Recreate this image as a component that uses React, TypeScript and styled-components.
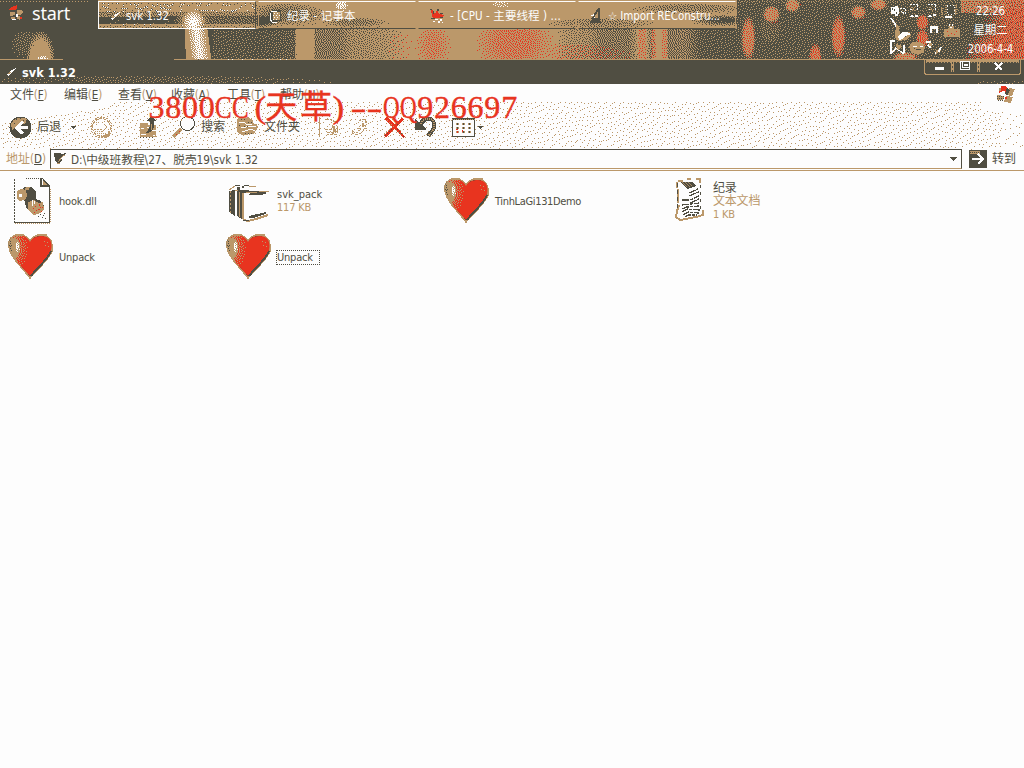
import React from "react";
import styled, { createGlobalStyle } from "styled-components";

const DARK = "#504e42";
const TAN = "#bb986a";
const RED = "#e8341f";
const WHITE = "#fdfdfd";
const UI = '"DejaVu Sans Condensed", "Noto Sans CJK SC", sans-serif';

type RGB = [number, number, number];
const palette: { hex: string; rgb: RGB }[] = [
  { hex: DARK, rgb: [80, 78, 66] },
  { hex: TAN, rgb: [187, 152, 106] },
  { hex: RED, rgb: [232, 52, 31] },
  { hex: WHITE, rgb: [253, 253, 253] },
];

const lerp = (a: RGB, b: RGB, t: number): RGB => [
  a[0] + (b[0] - a[0]) * t,
  a[1] + (b[1] - a[1]) * t,
  a[2] + (b[2] - a[2]) * t,
];
const D = palette[0].rgb;
const T = palette[1].rgb;
const R = palette[2].rgb;
const W = palette[3].rgb;

/* Error diffusion to the four palette colours; returns one path per colour. */
function diffuse(w: number, h: number, paint: (x: number, y: number) => RGB, grain = 0) {
  const paths = ["", "", "", ""];
  let seed = 7;
  let cur = new Float32Array((w + 2) * 3);
  let next = new Float32Array((w + 2) * 3);
  for (let y = 0; y < h; y++) {
    let runStart = 0;
    let runColor = -1;
    for (let x = 0; x < w; x++) {
      const src = paint(x, y);
      seed = (seed * 1103515245 + 12345) % 2147483648;
      const noise = (seed / 2147483648 - 0.5) * grain;
      const v = [0, 1, 2].map((c) => src[c] + cur[(x + 1) * 3 + c]);
      let best = 0;
      let bd = Infinity;
      palette.forEach((p, i) => {
        const d =
          (v[0] + noise - p.rgb[0]) ** 2 + (v[1] + noise - p.rgb[1]) ** 2 + (v[2] + noise - p.rgb[2]) ** 2;
        if (d < bd) {
          bd = d;
          best = i;
        }
      });
      for (let c = 0; c < 3; c++) {
        const e = Math.max(-110, Math.min(110, v[c] - palette[best].rgb[c]));
        cur[(x + 2) * 3 + c] += (e * 7) / 16;
        next[x * 3 + c] += (e * 3) / 16;
        next[(x + 1) * 3 + c] += (e * 5) / 16;
        next[(x + 2) * 3 + c] += e / 16;
      }
      if (best !== runColor) {
        if (runColor >= 0) paths[runColor] += `M${runStart} ${y}h${x - runStart}v1H${runStart}z`;
        runColor = best;
        runStart = x;
      }
    }
    paths[runColor] += `M${runStart} ${y}H${w}v1H${runStart}z`;
    cur = next;
    next = new Float32Array((w + 2) * 3);
  }
  return paths;
}

const clamp = (v: number) => Math.max(0, Math.min(1, v));
const blob = (x: number, y: number, cx: number, cy: number, rx: number, ry: number, soft = 0.4) => {
  const d = Math.hypot((x - cx) / rx, (y - cy) / ry);
  return clamp((1 - d) / soft);
};
/* Piecewise linear darkness of the flame photo along the x axis. */
const darkness: [number, number][] = [
  [0, 1], [211, 1], [212, 0.84], [248, 0.84], [253, 0.88], [294, 0.76], [296, 0], [313, 0],
  [315, 0.5], [340, 0.5], [350, 0.3], [385, 0.2], [398, 0.08], [405, 0], [555, 0], [566, 0.2], [590, 0.3],
  [600, 0.5], [628, 0.52], [635, 0.25], [638, 0], [645, 0], [650, 0.4], [655, 0], [666, 0], [668, 0.5], [685, 0.45],
  [700, 0.82], [740, 0.85], [1024, 0.85],
];
const curve = (x: number) => {
  for (let i = 1; i < darkness.length; i++) {
    if (x <= darkness[i][0]) {
      const [x0, a] = darkness[i - 1];
      const [x1, b] = darkness[i];
      return a + ((b - a) * (x - x0)) / (x1 - x0);
    }
  }
  return 0.85;
};

function flames(x: number, y: number): RGB {
  if (y === 59) return x > 62 && x < 174 ? D : T;
  if (x < 88 && y === 1) return x % 3 ? D : T;
  let tan = 1 - curve(x);
  let red = 0;
  let white = 0;
  if (y < 29 && x > 97 && x < 257) {
    tan = y < 16 ? 0.72 - Math.abs(y - 9) * 0.01 : y < 24 ? 0.04 : 0.85;
    if (x < 160 && y < 17 && y > 7) tan = 0.6;
    if (x > 205 && y > 15) tan = Math.max(tan, 0.3);
    if (y < 12) white = 0.2;
    white = Math.max(white, 0.9 * blob(x, y, 193, 22, 12, 13, 0.8));
    tan = Math.max(tan, blob(x, y, 193, 20, 20, 19, 0.7));
  } else if (y < 29 && x >= 257 && x < 737) {
    tan = 1;
    tan -= 0.5 * blob(x, y, 285, 14, 45, 13, 0.6);
    tan -= 0.9 * blob(x, y, 258, 21, 22, 7, 0.6);
    tan -= 0.45 * blob(x, y, 355, 22, 36, 6, 0.6);
    tan -= 0.35 * blob(x, y, 600, 23, 60, 7, 0.6);
    tan -= 0.4 * blob(x, y, 690, 8, 66, 6, 0.6);
    tan -= 0.95 * blob(x, y, 724, 20, 36, 6, 0.7);
    white = 0.6 * blob(x, y, 341, 5, 7, 5) + 0.25 * blob(x, y, 500, 4, 10, 4);
  } else {
    if (y > 30) {
      tan = Math.max(tan, blob(x, y, 40, 60, 15, 31, 0.35));
      tan = Math.max(tan, 0.22 * blob(x, y, 26, 43, 18, 17, 0.5));
      white = Math.max(white, blob(x, y, 42, 61, 8, 7, 0.8));
    }
    if (x > 184 && x < 213) {
      const shift = (y - 29) * 0.13;
      tan = x > 184 + shift * 0.4 && x < 207 + shift ? 1 : tan;
      white = Math.max(white, 0.75 * clamp(1.15 - Math.abs(x - 196 - shift) / 8));
    }
    red = Math.max(red, 0.26 * blob(x, y, 433, 45, 19, 30, 0.7));
    red = Math.max(red, 0.05 * blob(x, y, 400, 45, 20, 30, 0.7));
    red = Math.max(red, 0.34 * blob(x, y, 514, 42, 42, 34, 0.6));
    red = Math.max(red, 0.12 * blob(x, y, 570, 54, 70, 14, 0.5));
    if ((x > 637 && x < 646) || (x > 650 && x < 656) || (x > 661 && x < 667)) red = 0.2;
  }
  if (x > 737) {
    tan = y < 3 ? 0.3 : 0.17;
    const spots: [number, number, number, number, number][] = [
      [748, 38, 8, 25, 0.28], [771, 14, 10, 10, 0.2], [792, 5, 9, 8, 0.18],
      [815, 57, 7, 15, 0.4], [838, 36, 8, 24, 0.36], [858, 12, 9, 8, 0.22],
      [878, 4, 10, 7, 0.2], [922, 22, 7, 9, 0.45], [922, 38, 7, 10, 0.45], [905, 57, 14, 6, 0.2],
    ];
    for (const [cx, cy, rx, ry, amount] of spots) {
      const b = blob(x, y, cx, cy, rx, ry, 0.45);
      tan = Math.max(tan, b);
      red = Math.max(red, b * amount);
    }
    if (y > 18) tan = Math.max(tan, 0.3 * blob(x, y, 770, 28, 14, 20));
    const edge = clamp((x - 982 + (y > 30 ? 20 : 0) * clamp((y - 30) / 15)) / 26) * (y > 8 ? 1 : 0.8);
    tan = Math.max(tan, edge * 0.85);
    red = Math.max(red, edge * 0.48);
    if (x > 960 && y < 13) {
      tan = Math.max(tan, 0.85);
      red = Math.max(red, 0.2);
    }
  }
  let c = lerp(D, T, clamp(tan));
  c = lerp(c, R, clamp(red));
  return lerp(c, W, clamp(white));
}

const wallpaper = diffuse(1024, 60, flames, 24);
const titleShade = diffuse(
  1024,
  24,
  (x, y) =>
    lerp(D, T, x < 345 && y > 14 && y < 23 ? (x > 75 ? 0.15 : 0.07) * (y > 18 ? 1.2 : 0.8) * clamp((360 - x) / 160) : x > 975 && y > 18 ? 0.08 : 0),
  24
);
const barShade = diffuse(
  1024,
  86,
  (x, y) => {
    const start = x < 110 ? 36 - x * 0.15 : x > 980 ? 24 : 15;
    const a = y < start || y > 63 ? 0 : 0.065 * clamp((y - start) / 5 + 0.5) * (x > 1000 ? 0.5 : 1);
    return lerp(W, T, a);
  },
  50
);
const heartArt = diffuse(48, 48, (x, y) => {
  const light = blob(x, y, 11, 15, 12, 22, 1);
  const shade = blob(x, y, 5, 15, 9, 20, 0.7);
  let c = lerp(R, T, clamp(light * 0.7 + shade));
  c = lerp(c, D, 0.6 * clamp((6 - x) / 4));
  return lerp(c, W, 0.7 * blob(x, y, 11, 13, 3, 7, 0.7));
});

const Art = ({ paths }: { paths: string[] }) => (
  <>
    {paths.map((d, i) => (
      <path key={i} d={d} fill={palette[i].hex} />
    ))}
  </>
);

const Global = createGlobalStyle`
  body { margin: 0; background: ${WHITE}; overflow: hidden; }
  * { box-sizing: border-box; }
`;
const Screen = styled.div`
  width: 1024px;
  height: 768px;
  position: relative;
  display: flex;
  flex-direction: column;
  font: 11px/14px ${UI};
  color: ${DARK};
  background: ${WHITE};
`;
const Backdrop = styled.svg`
  position: absolute;
  left: 0;
  top: 0;
  z-index: 0;
  shape-rendering: crispEdges;
`;
const Svg = styled.svg`
  display: block;
  position: relative;
  flex: none;
  shape-rendering: crispEdges;
  overflow: visible;
`;
const Taskbar = styled.header`
  height: 60px;
  position: relative;
  display: flex;
  align-items: flex-start;
  color: ${WHITE};
`;
const StartButton = styled.div`
  position: relative;
  width: 98px;
  height: 26px;
  display: flex;
  align-items: center;
  padding-left: 9px;
  gap: 8px;
  font: 18px/24px "Noto Sans", sans-serif;
  letter-spacing: -0.2px;
`;
const Task = styled.div<{ $active?: boolean }>`
  position: relative;
  width: 158px;
  height: 28px;
  margin: 1px 2px 0 0;
  padding: 1px 8px 0 10px;
  display: flex;
  align-items: center;
  gap: 5px;
  border: 1px solid ${(p) => (p.$active ? WHITE : DARK)};
  border-top-color: ${WHITE};
  border-left-color: ${(p) => (p.$active ? WHITE : TAN)};
  border-right-color: ${(p) => (p.$active ? DARK : TAN)};
  white-space: nowrap;
  font-size: 11.5px;
`;
const TaskLabel = styled.span<{ $track?: number }>`
  letter-spacing: ${(p) => p.$track ?? 0}px;
`;
const Tray = styled.div`
  position: relative;
  margin-left: auto;
  display: flex;
  height: 58px;
`;
const Clock = styled.div`
  width: 64px;
  height: 57px;
  padding: 2px 3px 0 0;
  display: flex;
  flex-direction: column;
  align-items: center;
  line-height: 19px;
  font-size: 11.5px;
  letter-spacing: -0.2px;
  white-space: nowrap;
`;
const TitleBar = styled.div`
  position: relative;
  height: 24px;
  display: flex;
  align-items: center;
  padding-left: 5px;
  background: ${DARK};
`;
const Title = styled.h1`
  position: relative;
  margin: 1px 0 0 5px;
  font: bold 12.5px/20px "DejaVu Sans Condensed", sans-serif;
  letter-spacing: 0.1px;
  color: ${WHITE};
`;
const WindowButtons = styled.div`
  position: relative;
  margin-left: auto;
  margin-right: 3px;
  align-self: flex-start;
`;
const Bars = styled.div`
  position: relative;
  height: 87px;
  border-bottom: 1px solid ${TAN};
`;
const MenuBar = styled.nav`
  position: relative;
  height: 22px;
  display: flex;
  align-items: center;
  padding: 0 8px 0 10px;
`;
const MenuItem = styled.span<{ $w: number }>`
  width: ${(p) => p.$w}px;
  font-size: 12px;
  white-space: nowrap;
  letter-spacing: -0.1px;
`;
const Key = styled.span`
  font-size: 11.5px;
  color: ${TAN};
  u { color: ${DARK}; }
`;
const Toolbar = styled.div`
  position: relative;
  height: 42px;
  display: flex;
  align-items: center;
  padding-left: 9px;
`;
const Tool = styled.div<{ $w: number }>`
  width: ${(p) => p.$w}px;
  height: 26px;
  display: flex;
  align-items: center;
  gap: 5px;
  font-size: 12px;
  white-space: nowrap;
`;
const AddressBar = styled.div`
  position: relative;
  height: 22px;
  display: flex;
  align-items: center;
  padding-left: 6px;
  font-size: 12px;
`;
const AddressLabel = styled.span`
  width: 44px;
  color: ${TAN};
  white-space: nowrap;
`;
const AddressInput = styled.div`
  width: 912px;
  height: 20px;
  margin-right: 7px;
  padding: 0 4px 0 2px;
  display: flex;
  align-items: center;
  gap: 4px;
  border: 1px solid ${DARK};
  border-bottom-color: ${TAN};
  background: ${WHITE};
`;
const Path = styled.span`
  flex: 1;
  padding-top: 1px;
  font-size: 11.7px;
`;
const Go = styled.div`
  display: flex;
  align-items: center;
  gap: 5px;
  white-space: nowrap;
`;
const Files = styled.main`
  flex: 1;
  display: grid;
  grid-template-columns: repeat(4, 218px);
  grid-auto-rows: 56px;
  align-content: start;
  padding: 2px 0 0 6px;
`;
const File = styled.div`
  display: flex;
  align-items: center;
  gap: 5px;
`;
const FileText = styled.div`
  display: flex;
  flex-direction: column;
  align-items: flex-start;
  line-height: 13px;
`;
const FileName = styled.span<{ $focus?: boolean; $track?: number; $size?: number }>`
  font-size: ${(p) => p.$size ?? 11}px;
  letter-spacing: ${(p) => p.$track ?? -0.2}px;
  outline: ${(p) => (p.$focus ? `1px dotted ${DARK}` : "none")};
  padding-right: ${(p) => (p.$focus ? "6px" : "0")};
`;
const Detail = styled.span<{ $size?: number }>`
  font-size: ${(p) => p.$size ?? 11}px;
  letter-spacing: -0.2px;
  color: ${TAN};
`;
const Watermark = styled.div`
  position: absolute;
  left: 148px;
  top: 89px;
  height: 36px;
  display: flex;
  color: ${RED};
  font: 32px/36px "Liberation Serif", "Noto Sans CJK SC", serif;
  -webkit-text-stroke: 0.4px ${RED};
`;
const Glyph = styled.span<{ $wide?: boolean; $squeeze?: number; $shift?: number }>`
  width: ${(p) => (p.$wide ? 33.6 : 16.8)}px;
  display: flex;
  justify-content: center;
  transform: translateX(${(p) => p.$shift ?? 0}px) scaleX(${(p) => p.$squeeze ?? 1});
`;

const Feather = () => (
  <Svg width="12" height="12" viewBox="0 0 12 12">
    <path d="M2 9l2-3 3-2 4-2-2 3-4 3-2 2z" fill={WHITE} />
    <path d="M3 8l3-2" stroke={TAN} />
  </Svg>
);
const Caret = () => (
  <Svg width="5" height="3" viewBox="0 0 5 3">
    <path d="M0 0h5v1H0zM1 1h3v1H1zM2 2h1v1H2z" fill={DARK} />
  </Svg>
);
const Dropdown = () => (
  <Svg width="7" height="4" viewBox="0 0 7 4">
    <path d="M0 0h7v1H0zM1 1h5v1H1zM2 2h3v1H2zM3 3h1v1H3z" fill={DARK} />
  </Svg>
);
const Flag = () => (
  <Svg width="19" height="19" viewBox="0 0 19 19">
    <path d="M5 0h4l2 2-1 4-3-1-4 2z" fill={RED} />
    <path d="M3 2h2v3H3zM13 2l6 1-3 7-6-1z" fill={TAN} />
    <path d="M11 2l3 2-3 6-2-2z" fill={DARK} />
    <path d="M10 10l7 1-2 6-7-1z" fill={TAN} />
    <path d="M1 9l7 1-1 4-6 0z" fill={TAN} />
    <path d="M1 10h7M1 12h7M2 14h6" stroke={DARK} strokeDasharray="1 1" />
    <path d="M9 11h2v2H9z" fill={RED} />
  </Svg>
);
const StartFlag = () => (
  <Svg width="15" height="16" viewBox="0 0 15 16">
    <path d="M2 2l6-2v3L7 5H0z" fill={RED} />
    <path d="M8 5h5l1 2-2 3H8zM1 7h5v3l-5 1zM9 11l4 1-2 3-3-1zM2 12h4v2H2z" fill={TAN} />
    <path d="M7 9h2v3H7zM3 14h4v1H3z" fill={WHITE} />
    <path d="M11 12h2v2h-2z" fill={RED} />
  </Svg>
);

const HeartIcon = ({ id }: { id: string }) => (
  <Svg width="48" height="48" viewBox="0 0 48 48">
    <defs>
      <clipPath id={id}>
        <path d="M24 9C21 3 16 2 12 2C4 3 2 8 3 14C5 24 16 34 24 43C31 35 42 25 45 17C47 8 43 3 36 3C30 3 26 5 24 9Z" />
      </clipPath>
    </defs>
    <path d="M24 8C21 3 16 1 12 2C4 3 2 8 3 14C5 25 16 34 24 45C31 37 43 26 46 18C47 8 43 3 36 2C30 2 26 4 24 8Z" fill={DARK} stroke={TAN} strokeWidth="1.6" />
    <g clipPath={`url(#${id})`}>
      <Art paths={heartArt} />
    </g>
    <path d="M45 18C43 25 33 33 25 43" fill="none" stroke={DARK} strokeWidth="2" />
    <path d="M9 2h9M31 2h10" stroke={TAN} strokeWidth="2" />
    <path d="M38 8h1v1h-1zM41 9h1v1h-1zM39 12h1v1h-1zM42 13h1v1h-1z" fill={TAN} />
  </Svg>
);
const DllIcon = () => (
  <Svg width="48" height="48" viewBox="0 0 48 48">
    <path d="M8.500 2V46" stroke={DARK} strokeDasharray="2 1" />
    <path d="M8 45.500H44M43.500 9V46" stroke={DARK} />
    <path d="M9 46.500H45M44.500 12V46" stroke={TAN} strokeDasharray="1 1" />
    <path d="M20 1.500H35" stroke={DARK} strokeDasharray="1 1" />
    <path d="M34 1h2l8 8v1H34z" fill={DARK} />
    <path d="M37 4v4h4z" fill={TAN} />
    <path d="M36 2v6" fill="none" stroke={WHITE} />
    <path d="M14 14l4-4h8l4 5v7l5 2 3 5-4 6-9 1-5-5-1-7-3-2z" fill={DARK} />
    <path d="M11 14l4-2 5 1 2 5-3 5-6 1-2-3z" fill={TAN} />
    <path d="M13 17h3v3h-3z" fill={WHITE} />
    <path d="M20 10h4l-3 6-3-2z" fill={TAN} />
    <path d="M20 13h5l4 4v8l-7-2z" fill={DARK} />
    <path d="M22 25l6-2 5 3 4-1 1 7-4 4-6 2-6-5z" fill={TAN} />
    <path d="M29 29h1v1h-1zM33 27h1v2h-1zM32 32h2v1h-2zM35 34h1v1h-1zM28 35h1v1h-1zM36 30h1v1h-1zM30 33h1v1h-1zM34 30h1v1h-1zM27 31h1v1h-1z" fill={RED} />
    <path d="M26 23h1v6h-1zM28 24h1v3h-1z" fill={WHITE} />
    <path d="M34 37h1v1h-1zM37 38h1v1h-1zM36 40h1v1h-1zM39 41h1v1h-1zM32 39h1v1h-1zM38 36h1v1h-1z" fill={DARK} />
  </Svg>
);
const PackIcon = () => (
  <Svg width="48" height="48" viewBox="0 0 48 48">
    <path d="M5 14l6-1v26l-6-4z" fill={DARK} />
    <path d="M6 14v22" stroke={TAN} strokeDasharray="2 2" />
    <path d="M13 14l5 1v27l-5-3z" fill={DARK} />
    <path d="M15 15v25" stroke={TAN} strokeWidth="1" />
    <path d="M18 15l2 1v27l-2-1z" fill={TAN} />
    <path d="M5 13l6-4M25 9h7M33 14h12" fill="none" stroke={TAN} />
    <path d="M11 8h5v1h-5zM20 8h5v1h-5zM13 10h3v3h-3zM18 9h2v2h-2zM14 13l21 1v1l-14 1-7-1z" fill={DARK} />
    <path d="M11 13h3M22 16l18-1" stroke={TAN} />
    <path d="M26 16l14-1 3 1-5 2H25z" fill={DARK} />
    <path d="M20 43l4 1 8-2 12-4" fill="none" stroke={TAN} strokeWidth="2" />
    <path d="M25 39l17-4v2l-13 4h-4zM19 43h6v1h-6z" fill={DARK} />
  </Svg>
);
const NoteIcon = () => (
  <Svg width="34" height="48" viewBox="5 0 34 48">
    <path d="M8 6l3-3 20-1v14l2 18 1 4-25 5-3-4 3-5z" fill={WHITE} />
    <path d="M9 4h5M18 2h4M27 2h4v4M8 5v6M9 12v14M10 28l-2 6-1 6 4 3 16-3 7-2v-5" fill="none" stroke={TAN} strokeWidth="2" />
    <path d="M8.500 6v28" stroke={DARK} strokeDasharray="4 3" />
    <path d="M11 5h12l4 4-9 3z" fill={DARK} />
    <path d="M13 5l5 5M16 5l5 5M19 5l4 4" stroke={TAN} strokeWidth=".8" />
    <path d="M20 16l9-4M20 19l10-4M13 23h8l9-4M21 26l9-4M13 28l17-2M13 32l5-2 12-1M13 35l5-3 13 1M14 38l5-3 11 1M16 40l3-2h9" fill="none" stroke={DARK} strokeWidth="1.3" strokeDasharray="7 1 3 1" />
    <path d="M31 8v28" stroke={DARK} strokeDasharray="3 4" />
  </Svg>
);
const BackIcon = () => (
  <Svg width="23" height="23" viewBox="0 0 23 23">
    <circle cx="11.500" cy="11.500" r="11" fill={DARK} />
    <path d="M2 8C4 2 12 0 18 3L16 8H9L3 14Z" fill={TAN} />
    <path d="M2 5h2v1H2zM7 2h1v2H7zM11 1h1v2h-1zM14 4h1v1h-1zM5 7h1v1H5z" fill={DARK} />
    <path d="M12 5l-7 7 7 6 3-1-4-4h8v-3h-8l4-4z" fill={WHITE} />
  </Svg>
);
const ForwardIcon = () => (
  <Svg width="23" height="23" viewBox="0 0 23 23">
    <circle cx="11.500" cy="11.500" r="10.500" fill={WHITE} stroke={TAN} strokeDasharray="2 1" />
    <circle cx="11.500" cy="11.500" r="9" fill="none" stroke={TAN} strokeDasharray="3 1" />
    <path d="M12 6l5 5-5 5M4 13h8" fill="none" stroke={TAN} strokeDasharray="2 1" />
    <path d="M5 15h8M5 17h12M7 19h9M6 6h3M6 8h1M14 5h2M15 18h4M18 13v5" stroke={TAN} strokeDasharray="1 1" />
    <path d="M13 20h5l2-3" fill="none" stroke={TAN} strokeWidth="2" />
  </Svg>
);
const UpIcon = () => (
  <Svg width="20" height="24" viewBox="0 0 20 24">
    <path d="M1 8h6l2 2h8v12H1z" fill={TAN} />
    <path d="M2 13h3M8 12h3M2 19h5M13 15h4M14 20h2" stroke={WHITE} />
    <path d="M1 22h15" stroke={DARK} strokeDasharray="1 2" />
    <path d="M7 6l5-5 6 5h-3v6l-2 4-4 2H6l3-3 2-4V6z" fill={DARK} />
    <path d="M12 9v6" stroke={TAN} />
  </Svg>
);
const SearchIcon = () => (
  <Svg width="24" height="24" viewBox="0 0 24 24">
    <path d="M1 22l8-8" stroke={TAN} strokeWidth="3.500" />
    <path d="M10 13l2-1" stroke={DARK} />
    <path d="M4 19h1v1H4zM7 16h1v1H7z" fill={RED} />
    <circle cx="15.500" cy="8.500" r="7" fill={WHITE} stroke={DARK} />
    <path d="M9 6c1-4 5-5 9-4" fill="none" stroke={TAN} strokeDasharray="2 1" />
  </Svg>
);
const FolderIcon = () => (
  <Svg width="23" height="22" viewBox="0 0 23 22">
    <path d="M1 3l3-2 5 1 3-1 5 3v4h4l1 3-4 7-12 1-5-3z" fill={TAN} />
    <path d="M3 6h5l2 2h6M5 12l10-2 5 1M6 16l9-3 4 2" fill="none" stroke={WHITE} />
    <path d="M5 3h5M12 6h4M8 10h4M9 17h8M3 9v3" stroke={DARK} strokeDasharray="1 2" />
  </Svg>
);
const MoveIcon = () => (
  <Svg width="18" height="18" viewBox="0 0 18 18">
    <path d="M2 1h5l1 2h5v3M1 11h7V7l6 5-6 5v-3H2M13 8v8H3" fill="none" stroke={TAN} strokeDasharray="3 1" />
    <path d="M9 9l4 3-4 3z" fill={TAN} />
  </Svg>
);
const CopyIcon = () => (
  <Svg width="19" height="18" viewBox="0 0 19 18">
    <path d="M2 13c4 3 8 1 9-3h-3l5-5 4 5h-3c-1 6-7 8-12 5z" fill="none" stroke={TAN} strokeDasharray="3 1" />
    <path d="M9 2h2v1H9zM12 1h4v1h-4zM15 3h2v2h-2zM12 5h2v4h-2z" fill={TAN} />
  </Svg>
);
const DeleteIcon = () => (
  <Svg width="23" height="23" viewBox="0 0 23 23">
    <path d="M1 3l3-2 8 8 6-7 3 1-7 8 8 10-2 1-9-9-8 8-2-1 8-9z" fill={RED} />
    <path d="M2 20l7-7M14 13l7 8M14 9l5-6" stroke={DARK} strokeDasharray="1 2" />
    <path d="M1 19l7-7M4 4l7 7M13 14l6 7" stroke={TAN} strokeDasharray="1 2" />
  </Svg>
);
const UndoIcon = () => (
  <Svg width="23" height="22" viewBox="0 0 23 22">
    <path d="M7 8C9 1 20 1 20 8C21 14 17 16 14 20" fill="none" stroke={DARK} strokeWidth="4" />
    <path d="M1 3v11h11v-2L8 9l4-3-2-2-4 3z" fill={DARK} />
    <path d="M7 8C9 1 20 1 20 8C21 14 17 16 14 20" fill="none" stroke={TAN} strokeDasharray="1 1" strokeWidth="2" />
  </Svg>
);
const ViewsIcon = () => (
  <Svg width="23" height="19" viewBox="0 0 23 19">
    <rect width="23" height="19" fill={DARK} />
    <rect x="1" y="2" width="21" height="16" fill={WHITE} />
    <path d="M0 1.500h23" stroke={TAN} strokeDasharray="1 1" />
    {[4, 10, 16].map((x) =>
      [5, 9, 13].map((y) => (
        <g key={`${x}-${y}`}>
          <rect x={x} y={y} width="3" height="2" fill={TAN} />
          <rect x={x + 1} y={y} width="1" height="2" fill={x === 10 ? DARK : y === 13 && x === 4 ? RED : DARK} />
        </g>
      ))
    )}
    <path d="M4 11h2v1H4zM10 12h1v2h-1z" fill={RED} />
  </Svg>
);
const TrayIcons = () => (
  <Svg width="72" height="58" viewBox="-2 0 72 58">
    <path d="M1 7h4v-1h3v2h1v6H8v2H5v-2H1z" fill={WHITE} />
    <path d="M2 8h1v2H2zM4 9h1v2H4zM6 12h1v2H6z" fill={DARK} />
    <path d="M10 9l5-1v6l-4-3" fill="none" stroke={WHITE} strokeDasharray="2 1" />
    <path d="M20 4h8M20 9h3M38 4h8M39 9h3M27 5v5M45 5v5" fill="none" stroke={WHITE} strokeDasharray="2 1" />
    <path d="M19 17l3-3 2 3zM25 15h3v2h-3zM37 17l3-3 2 3zM43 14h3v2h-3z" fill={WHITE} />
    <path d="M22 7l3 5M40 7l3 5" stroke={TAN} strokeWidth="2" strokeDasharray="1 1" />
    <path d="M52 8v9M56 5v10M64 5v10M66 5v10" stroke={TAN} strokeWidth="1.500" strokeDasharray="1 1" />
    <path d="M57 5h7v9h-7z" fill={DARK} stroke={WHITE} strokeDasharray="1 2" />
    <path d="M55 16h7v2h-7z" fill={WHITE} />
    <path d="M1 18l4 6 1 3" fill="none" stroke={WHITE} strokeWidth="1.500" />
    <path d="M6 25h2l3 5 7 1 3 4-5 5-8 1-3-4z" fill={TAN} />
    <path d="M9 29h7l2 3-2 5h-5z" fill={DARK} />
    <path d="M8 36l4-4h5l4 2-6 2-2 3-4 1z" fill={WHITE} />
    <path d="M40 26h8v7h-2v-4h-4v4h-2z" fill={WHITE} />
    <path d="M54 29h5v-3h5v3h6v8H54z" fill={TAN} />
    <path d="M59 24h1v2h-1zM62 24h1v2h-1zM60 27h2v1h-2z" fill={WHITE} />
    <path d="M57 31h1v1h-1zM61 33h1v1h-1zM66 31h1v1h-1zM64 34h1v1h-1zM58 35h1v1h-1z" fill={RED} />
    <path d="M5 41H1v12M1 54l5-6 8 6M14 53v-8" fill="none" stroke={WHITE} strokeWidth="1.400" />
    <path d="M6 44l6 2-4 4z" fill={TAN} />
    <path d="M19 47l3-5h8l5 4-1 6-6 3-7-3z" fill={TAN} />
    <path d="M23 46h4v1h-4zM30 46h3v1h-3z" fill={WHITE} />
    <path d="M26 49h5v1h-5zM24 48h1v1h-1z" fill={DARK} />
    <path d="M36 42h4l2 3M38 45l3 3M45 53l4-2 2-4" fill="none" stroke={WHITE} strokeWidth="1.500" />
    <path d="M39 43h3v3h-3zM46 50h2v3h-2z" fill={TAN} />
  </Svg>
);
const Controls = () => (
  <Svg width="97" height="15" viewBox="0 0 97 15">
    <path d="M2 0h93v3H2z" fill={TAN} />
    <path d="M3 2.500h91" stroke={DARK} strokeDasharray="2 1" />
    <path d="M.5 0v13l1 1h94l1-1V0" fill="none" stroke={TAN} />
    <path d="M28 1v11M54 1v11" stroke={TAN} strokeWidth="3" />
    <path d="M28 2v11M54 2v11" stroke={DARK} strokeDasharray="2 2" />
    <path d="M11 7h9v3h-9z" fill={WHITE} />
    <path d="M36.500 1.500h9v8h-9z" fill={DARK} stroke={WHITE} />
    <path d="M38.500 1.500h7v6h-7z" fill={DARK} stroke={WHITE} />
    <path d="M40 5h4" stroke={WHITE} strokeWidth="2" />
    <path d="M71 3l7 7M78 3l-7 7" stroke={WHITE} strokeWidth="2.200" />
  </Svg>
);
const NotepadTaskIcon = () => (
  <Svg width="13" height="14" viewBox="0 0 13 14">
    <path d="M3 1h8l1 3v8l-8 1H1L0 5z" fill={DARK} />
    <path d="M2 2h6M1 4v6l2 3h5" fill="none" stroke={WHITE} />
    <path d="M4 3h7v8H4z" fill={TAN} />
    <path d="M5 4h6M4 6h7M5 8h6M4 10h6" stroke={WHITE} strokeDasharray="1 2" />
  </Svg>
);
const DebugTaskIcon = () => (
  <Svg width="16" height="16" viewBox="0 0 16 16">
    <path d="M2 2h2l2 4 2-4 2 4 5 1-3 3H4L3 8z" fill={RED} />
    <path d="M1 1h2v1H1zM4 3h1v3H4zM8 1h2v2H8zM11 5h3v1h-3zM2 10h4v1H2zM11 9h3v1h-3z" fill={DARK} />
    <path d="M6 11h3v1H6zM9 13h2v2H9zM11 11h2v2h-2zM13 14h1v1h-1zM4 13h2v1H4z" fill={WHITE} />
  </Svg>
);
const ImportTaskIcon = () => (
  <Svg width="14" height="17" viewBox="0 0 14 17">
    <path d="M10 0l1 2v11l2 3H1l2-3 1-5z" fill={DARK} />
    <path d="M5 11l4-7v7z" fill={TAN} />
    <path d="M2 8h3v1H2zM5 10h1v1H5zM4 7h1v1H4z" fill={WHITE} />
  </Svg>
);
const AddressIcon = () => (
  <Svg width="14" height="14" viewBox="0 0 14 14">
    <path d="M1 1h7v1l5-1-4 4v4l-4 3-3-4z" fill={DARK} />
    <path d="M5 10l4-5 3-2M4 12l3-1" fill="none" stroke={TAN} />
    <path d="M8 7l3-3" stroke={WHITE} />
  </Svg>
);
const GoIcon = () => (
  <Svg width="18" height="18" viewBox="0 0 18 18">
    <rect width="18" height="18" rx="1" fill={DARK} />
    <path d="M1 1h10v3H1z" fill={TAN} />
    <path d="M1 2.500h10" stroke={DARK} strokeDasharray="1 1" />
    <path d="M3 9h11M9 4l5 5-5 5" fill="none" stroke={WHITE} strokeWidth="2" />
  </Svg>
);

const menus: [string, string, number][] = [
  ["文件", "F", 54], ["编辑", "E", 54], ["查看", "V", 53],
  ["收藏", "A", 56], ["工具", "T", 53], ["帮助", "H", 50],
];

const squeeze: Record<string, number> = { C: 0.78, Q: 0.72, "-": 1.5, "(": 1.1, ")": 1.1 };
const shift: Record<string, number> = { "(": 3, ")": -3, "天": -1 };

export default function App() {
  return (
    <Screen>
      <Global />
      <Taskbar>
        <Backdrop width="1024" height="60"><Art paths={wallpaper} /></Backdrop>
        <StartButton><StartFlag />start</StartButton>
        <Task $active><Feather /><TaskLabel $track={-0.1}>svk 1.32</TaskLabel></Task>
        <Task><NotepadTaskIcon /><TaskLabel $track={0.1}>纪录 - 记事本</TaskLabel></Task>
        <Task><DebugTaskIcon /><TaskLabel $track={0.1}>- [CPU - 主要线程 ) ...</TaskLabel></Task>
        <Task><ImportTaskIcon /><TaskLabel $track={-0.1}>☆ Import REConstru...</TaskLabel></Task>
        <Tray>
          <TrayIcons />
          <Clock>
            <span>22:26</span>
            <span>星期二</span>
            <span>2006-4-4</span>
          </Clock>
        </Tray>
      </Taskbar>
      <TitleBar>
        <Backdrop width="1024" height="24"><Art paths={titleShade} /></Backdrop>
        <Feather />
        <Title>svk 1.32</Title>
        <WindowButtons><Controls /></WindowButtons>
      </TitleBar>
      <Bars>
        <Backdrop width="1024" height="86"><Art paths={barShade} /></Backdrop>
        <MenuBar>
          {menus.map(([label, key, w]) => (
            <MenuItem key={key} $w={w}>{label}<Key>(<u>{key}</u>)</Key></MenuItem>
          ))}
          <Svg width="666" height="1" />
          <Flag />
        </MenuBar>
        <Toolbar>
          <Tool $w={62}><BackIcon />后退</Tool>
          <Tool $w={19}><Caret /></Tool>
          <Tool $w={49}><ForwardIcon /></Tool>
          <Tool $w={33}><UpIcon /></Tool>
          <Tool $w={64}><SearchIcon />搜索</Tool>
          <Tool $w={83}><FolderIcon />文件夹</Tool>
          <Tool $w={5}><Svg width="1" height="20"><path d="M.5 0v20" stroke={TAN} /></Svg></Tool>
          <Tool $w={26}><MoveIcon /></Tool>
          <Tool $w={33}><CopyIcon /></Tool>
          <Tool $w={31}><DeleteIcon /></Tool>
          <Tool $w={38}><UndoIcon /></Tool>
          <Tool $w={26}><ViewsIcon /></Tool>
          <Tool $w={7}><Caret /></Tool>
        </Toolbar>
        <AddressBar>
          <AddressLabel>地址<Key>(<u>D</u>)</Key></AddressLabel>
          <AddressInput>
            <AddressIcon />
            <Path>D:\中级班教程\27、脱壳19\svk 1.32</Path>
            <Dropdown />
          </AddressInput>
          <Go><GoIcon />转到</Go>
        </AddressBar>
      </Bars>
      <Files>
        <File><DllIcon /><FileText><FileName>hook.dll</FileName></FileText></File>
        <File><PackIcon /><FileText><FileName $track={0}>svk_pack</FileName><Detail>117 KB</Detail></FileText></File>
        <File><HeartIcon id="heart-demo" /><FileText><FileName $track={-0.35}>TinhLaGi131Demo</FileName></FileText></File>
        <File>
          <Svg width="9" height="1" />
          <NoteIcon />
          <FileText>
            <FileName $size={12}>纪录</FileName>
            <Detail $size={12}>文本文档</Detail>
            <Detail>1 KB</Detail>
          </FileText>
        </File>
        <File><HeartIcon id="heart-a" /><FileText><FileName>Unpack</FileName></FileText></File>
        <File><HeartIcon id="heart-b" /><FileText><FileName $focus>Unpack</FileName></FileText></File>
      </Files>
      <Watermark>
        {[..."3800CC(天草)--QQ926697"].map((ch, i) => (
          <Glyph key={i} $wide={ch > "\u4e00"} $squeeze={squeeze[ch]} $shift={shift[ch]}>{ch}</Glyph>
        ))}
      </Watermark>
    </Screen>
  );
}
